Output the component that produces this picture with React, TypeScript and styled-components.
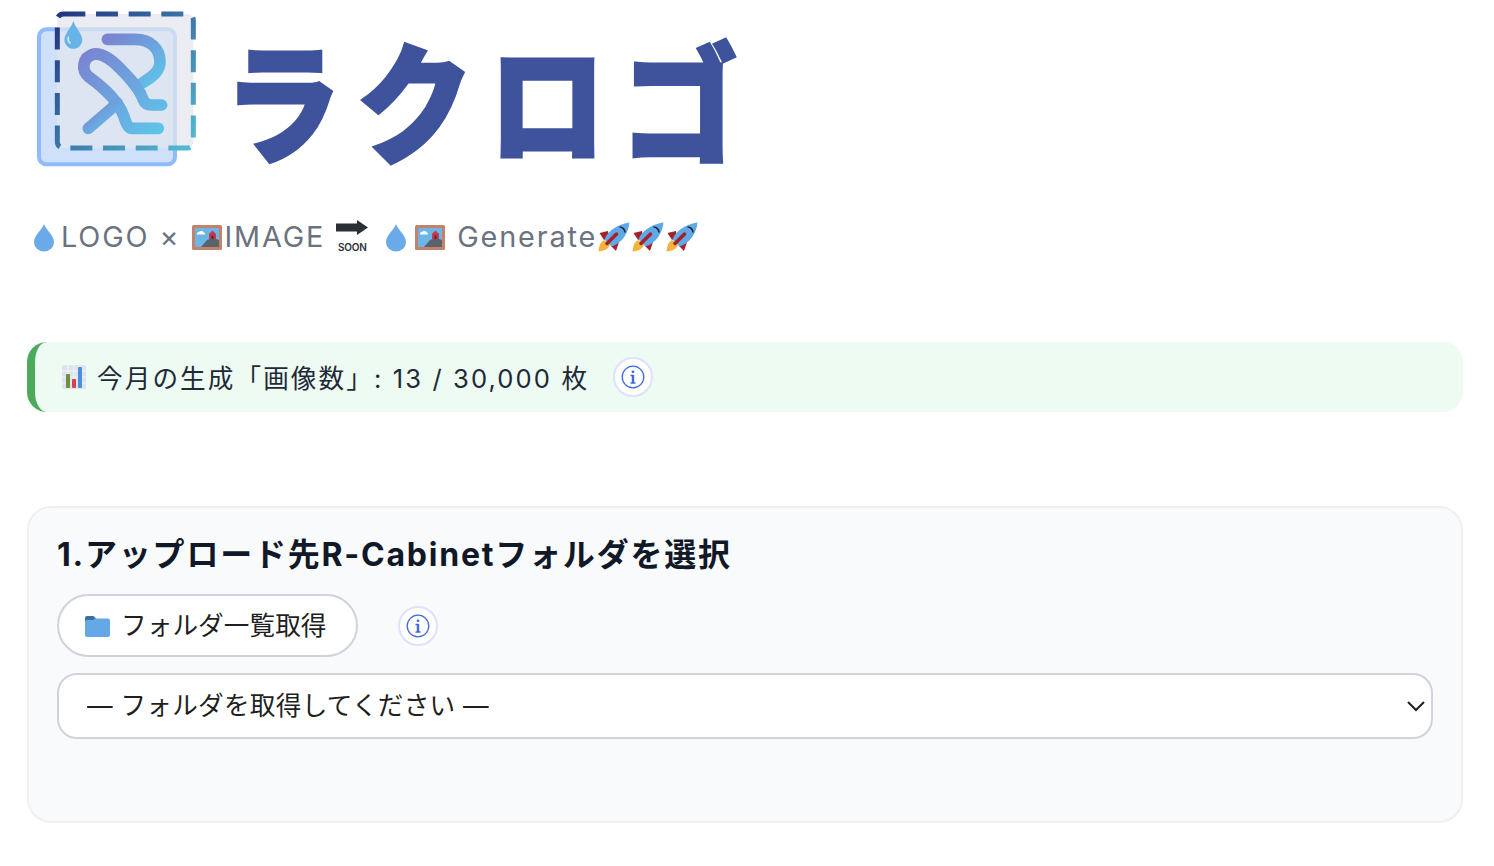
import React from "react";
import styled, { createGlobalStyle } from "styled-components";

const Global = createGlobalStyle`
  html, body { margin: 0; padding: 0; background: #fff; }
  body { font-family: Inter, "Noto Sans CJK JP", sans-serif; color: #1f2937; }
`;

const Page = styled.main`
  display: flex;
  flex-direction: column;
  padding: 0 31px 0 27px;
`;

const LogoRow = styled.header`
  display: flex;
  align-items: flex-start;
  height: 180px;
  margin-left: -7px;
`;

const LogoIcon = styled.svg`
  flex: none;
  width: 200px;
  height: 180px;
`;

const Wordmark = styled.h1`
  margin: 11px 0 0 4px;
  font-family: "Noto Sans CJK JP", sans-serif;
  font-weight: 900;
  font-size: 130px;
  line-height: 170px;
  letter-spacing: 17px;
  color: #3f529c;
  -webkit-text-stroke: 3px #3f529c;
  white-space: nowrap;
  transform: scaleX(0.9);
  transform-origin: left center;
`;

const Tagline = styled.p`
  margin: 39px 0 0;
  height: 36px;
  font-size: 28.8px;
  line-height: 36px;
  letter-spacing: 1.88px;
  color: #6b7280;
  white-space: nowrap;
`;

const EmojiCell = styled.span`
  display: inline-flex;
  justify-content: center;
  align-items: center;
  width: 34px;
  height: 36px;
  vertical-align: top;
  letter-spacing: 0;
`;

const SoonCell = styled(EmojiCell)`
  position: relative;
  top: -1px;
  flex-direction: column;
`;

const SoonLabel = styled.span`
  font-family: Inter, sans-serif;
  font-size: 10px;
  font-weight: 600;
  line-height: 10px;
  letter-spacing: -0.2px;
  color: #2b3036;
  margin-top: 7px;
`;

const UsageBanner = styled.section`
  display: flex;
  align-items: center;
  height: 70px;
  margin-top: 87px;
  box-sizing: border-box;
  padding-left: 27px;
  border-left: 8px solid #4caa5c;
  border-radius: 20px;
  background: #edfbf3;
  font-size: 25.6px;
  letter-spacing: 2.1px;
  color: #1f2937;
  white-space: nowrap;
`;

const BannerText = styled.span`
  margin-left: 11px;
  padding-bottom: 2px;
`;

const InfoButton = styled.button<{ $gap: number }>`
  display: flex;
  align-items: center;
  justify-content: center;
  flex: none;
  width: 40px;
  height: 40px;
  padding: 0;
  margin-left: ${(p) => p.$gap}px;
  border: 2px solid #dbe3ff;
  border-radius: 50%;
  background: #fff;
`;

const Card = styled.section`
  display: flex;
  flex-direction: column;
  box-sizing: border-box;
  height: 317px;
  margin-top: 94px;
  padding: 26px 28px 0;
  border: 2px solid #eef0f5;
  border-radius: 24px;
  background: #f9fafc;
`;

const CardTitle = styled.h2`
  margin: 0;
  font-size: 32px;
  line-height: 42px;
  font-weight: 700;
  letter-spacing: 1.78px;
  color: #111827;
  white-space: nowrap;
`;

const ActionRow = styled.div`
  display: flex;
  align-items: center;
  margin-top: 18px;
`;

const PillButton = styled.button`
  display: flex;
  align-items: center;
  gap: 11px;
  box-sizing: border-box;
  width: 301px;
  height: 63px;
  padding: 0 0 0 26px;
  border: 2px solid #d1d3dc;
  border-radius: 32px;
  background: #fff;
  font-family: inherit;
  font-size: 25.6px;
  letter-spacing: 0.1px;
  color: #1f1f1f;
`;

const PillLabel = styled.span`
  padding-bottom: 4px;
`;

const SelectWrap = styled.div`
  position: relative;
  margin-top: 16px;
`;

const FolderSelect = styled.select`
  display: block;
  width: 100%;
  height: 66px;
  box-sizing: border-box;
  padding: 0 60px 2px 28px;
  border: 2px solid #d1d3dc;
  border-radius: 20px;
  background: #fff;
  appearance: none;
  font-family: inherit;
  font-size: 25.6px;
  letter-spacing: 0.3px;
  color: #1f1f1f;
`;

const Chevron = styled.svg`
  position: absolute;
  right: 8px;
  top: 27px;
  width: 18px;
  height: 12px;
  pointer-events: none;
`;

const Drop = () => (
  <svg width="22" height="29" viewBox="0 0 22 29">
    <path d="M11 1 C12.5 6 21 12.5 21 19 A10 9.5 0 0 1 1 19 C1 12.5 9.5 6 11 1Z" fill="#6aaae8" />
  </svg>
);

const Picture = () => (
  <svg width="30" height="25" viewBox="0 0 30 25">
    <rect width="30" height="25" rx="1.5" fill="#c1846a" />
    <rect x="3" y="3" width="24" height="19" fill="#6cb5e6" />
    <path d="M5 9.500a2 2 0 0 1 2-2.500 3 3 0 0 1 5 0.500 1.700 1.700 0 0 1 1 2Z" fill="#fff" />
    <path d="M9 22 L15 15 L21 13 L27 15 V22Z" fill="#59636c" />
    <path d="M17 9 L20.500 5.500 L24 9 V14 H17Z" fill="#c23a4b" />
    <rect x="19.500" y="10.500" width="2" height="3.500" fill="#5a2730" />
  </svg>
);

const Rocket = () => (
  <svg width="32" height="30" viewBox="0 0 32 30">
    <path d="M6 18 C2 20 1 25 0.500 29.500 C5 29 10 28 12 23Z" fill="#f4b33e" />
    <path d="M10 9 L1.500 11 L6 18 L11 15Z" fill="#a6202c" />
    <path d="M21 20 L18 29 L13 24 L16 19Z" fill="#a6202c" />
    <path d="M6.500 17.500 C10 8 21 2 31.500 0.500 C30.500 11 24 21 13.500 24.500Z" fill="#5faae6" />
    <path d="M9 21.500 L18.500 12" stroke="#a6202c" strokeWidth="3.500" strokeLinecap="round" />
    <path d="M21.500 5 C24.500 5 27 7.500 27 10.500" stroke="#1f2430" strokeWidth="1.600" fill="none" />
  </svg>
);

const Chart = () => (
  <svg width="24" height="24" viewBox="0 0 24 24">
    <rect width="24" height="24" rx="2" fill="#dfe3ea" />
    <path d="M0 6H24M0 12H24M0 18H24M6 0V24M12 0V24M18 0V24" stroke="#f2f4f7" strokeWidth="1" />
    <rect x="4" y="9" width="4" height="14" rx="1" fill="#6f8f46" />
    <rect x="10" y="14" width="4" height="9" rx="1" fill="#d9404e" />
    <rect x="16" y="2" width="4" height="21" rx="1" fill="#4a90dc" />
  </svg>
);

const Folder = () => (
  <svg width="25" height="22" viewBox="0 0 25 22">
    <path d="M0 3a2 2 0 0 1 2-2h6.500l3 3H10v5H0Z" fill="#3f6f9f" />
    <path d="M0 7a2 2 0 0 1 2-2h6l2-1.500h13a2 2 0 0 1 2 2V20a2 2 0 0 1-2 2H2a2 2 0 0 1-2-2Z" fill="#65a8e6" />
  </svg>
);

const Info = ({ size }: { size: number }) => (
  <svg width={size} height={size} viewBox="0 0 24 24" fill="none" stroke="#4169e1">
    <circle cx="12" cy="12" r="10.800" strokeWidth="1.300" />
    <circle cx="12" cy="6.800" r="1.400" fill="#4169e1" stroke="none" />
    <path d="M12 10V18" strokeWidth="2.400" />
    <path d="M9.500 10.500H12.500M9.500 18H14.500" strokeWidth="1.300" />
  </svg>
);

export default function App() {
  return (
    <>
      <Global />
      <Page>
        <LogoRow>
          <LogoIcon viewBox="0 0 600 540" role="img" aria-label="ラクロゴ">
            <defs>
              <linearGradient id="dash" x1="0" y1="0" x2="1" y2="1">
                <stop offset="0" stopColor="#22337f" />
                <stop offset="1" stopColor="#55bcd4" />
              </linearGradient>
              <linearGradient id="fig" x1="0" y1="0" x2="1" y2="1">
                <stop offset="0" stopColor="#7a84d2" />
                <stop offset="1" stopColor="#5ec4ea" />
              </linearGradient>
            </defs>
            <rect x="57" y="88" width="408" height="405" rx="22" fill="#cfe0fb" stroke="#8fbcf9" strokeWidth="12" />
            <rect x="112" y="42" width="408" height="402" rx="18" fill="#e3e6ee" fillOpacity="0.72" />
            <rect x="112" y="42" width="408" height="402" rx="18" fill="none" stroke="url(#dash)" strokeWidth="15" strokeDasharray="66 32" />
            <path d="M160 62 C166 84 187 100 187 120 A27 27 0 0 1 133 120 C133 100 154 84 160 62Z" fill="#68b4e6" />
            <path d="M146 110 C142 118 146 128 152 130" stroke="#cfe6f7" strokeWidth="5" fill="none" />
            <g fill="none" stroke="url(#fig)" strokeWidth="35" strokeLinecap="round" strokeLinejoin="round">
              <path d="M262 118 H345 C395 118 420 150 420 185 C420 215 395 232 368 248" />
              <path d="M415 385 H335 C322 385 318 365 310 345 C295 305 260 270 208 232 C183 212 185 172 222 162 C250 160 275 180 300 205 C340 245 360 270 370 300 C375 312 385 315 395 315 H425" />
              <path d="M205 385 L292 310" />
            </g>
          </LogoIcon>
          <Wordmark>ラクロゴ</Wordmark>
        </LogoRow>

        <Tagline>
          <EmojiCell><Drop /></EmojiCell>
          LOGO × <EmojiCell><Picture /></EmojiCell>
          IMAGE{" "}
          <SoonCell>
            <svg width="32" height="15" viewBox="0 0 32 15">
              <path d="M0 3.500H21V0L32 7.500L21 15V11.500H0Z" fill="#2b3036" />
            </svg>
            <SoonLabel>SOON</SoonLabel>
          </SoonCell>{" "}
          <EmojiCell><Drop /></EmojiCell>
          <EmojiCell><Picture /></EmojiCell> Generate
          <EmojiCell><Rocket /></EmojiCell>
          <EmojiCell><Rocket /></EmojiCell>
          <EmojiCell><Rocket /></EmojiCell>
        </Tagline>

        <UsageBanner>
          <Chart />
          <BannerText>今月の生成「画像数」: 13 / 30,000 枚</BannerText>
          <InfoButton $gap={24} aria-label="情報"><Info size={24} /></InfoButton>
        </UsageBanner>

        <Card>
          <CardTitle>1.アップロード先R-Cabinetフォルダを選択</CardTitle>
          <ActionRow>
            <PillButton><Folder /><PillLabel>フォルダ一覧取得</PillLabel></PillButton>
            <InfoButton $gap={40} aria-label="情報"><Info size={24} /></InfoButton>
          </ActionRow>
          <SelectWrap>
            <FolderSelect defaultValue="">
              <option value="">— フォルダを取得してください —</option>
            </FolderSelect>
            <Chevron viewBox="0 0 18 12" fill="none" stroke="#1f1f1f" strokeWidth="2">
              <path d="M1 2L9 10L17 2" />
            </Chevron>
          </SelectWrap>
        </Card>
      </Page>
    </>
  );
}
